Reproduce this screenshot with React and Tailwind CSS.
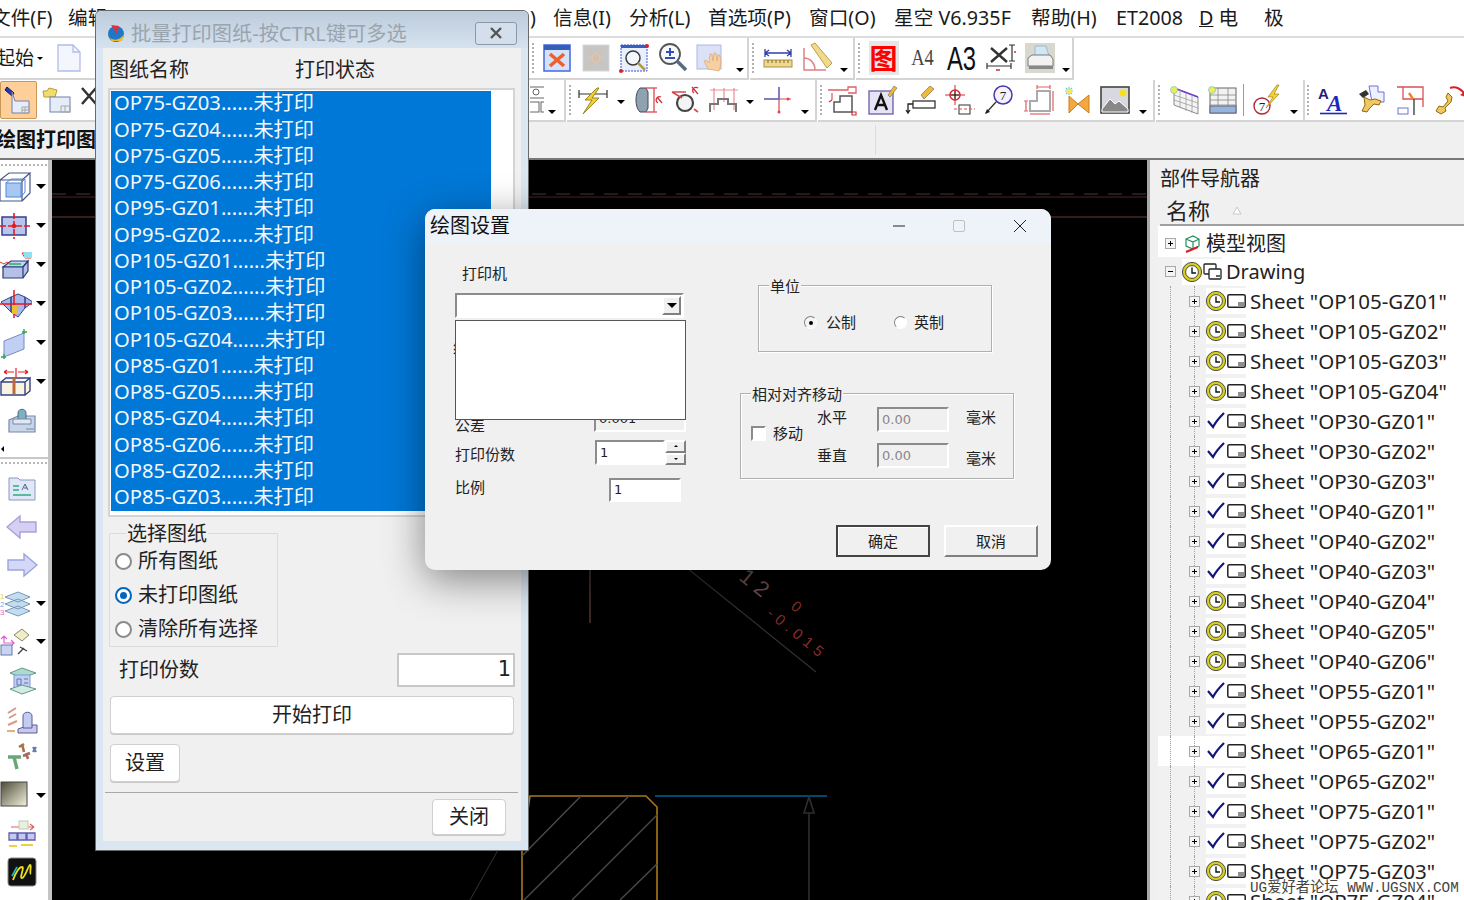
import React from "react";

const Svg = ({ children, className = "w-[32px] h-[32px]" }) => (
  <svg viewBox="0 0 32 32" className={`${className} shrink-0`} fill="none">
    {children}
  </svg>
);

// toolbar icons
const icons = {
  closeFrame: (
    <>
      <rect x="3" y="3" width="26" height="26" fill="#d5e2fb" stroke="#4468e0" strokeWidth="1.5" />
      <rect x="3" y="3" width="26" height="5" fill="#3560b8" />
      <path d="M9 12l14 12M23 12L9 24" stroke="#f0602a" strokeWidth="3.5" />
    </>
  ),
  greyFrame: (
    <>
      <rect x="3" y="3" width="26" height="26" fill="#c6c6c6" stroke="#d8d8d8" />
      <path d="M9 9l14 14M23 9L9 23" stroke="#d8bfa8" strokeWidth="3" />
      <circle cx="16" cy="16" r="4" stroke="#d8c8b8" strokeWidth="1.5" />
    </>
  ),
  zoomFrame: (
    <>
      <rect x="3" y="3" width="26" height="26" fill="#e9f0fb" stroke="#3a50d0" strokeDasharray="2 1" />
      <rect x="3" y="3" width="26" height="3" fill="#3560b8" />
      <circle cx="15" cy="16" r="7" fill="#f4f8fd" stroke="#3a3a3a" strokeWidth="1.5" />
      <path d="M20 21l7 7" stroke="#b09a50" strokeWidth="2.5" />
      <circle cx="29" cy="4" r="2" fill="#d8202a" />
      <circle cx="3" cy="29" r="2" fill="#d8202a" />
    </>
  ),
  zoomPm: (
    <>
      <circle cx="13" cy="12" r="10" fill="#f6f8fc" stroke="#555" strokeWidth="1.8" />
      <path d="M13 6v8M9 10h8M8 16h10" stroke="#3050b8" strokeWidth="2" />
      <path d="M20 19l9 9" stroke="#5a6a80" strokeWidth="3.5" />
    </>
  ),
  hand: (
    <>
      <rect x="2" y="3" width="24" height="24" fill="#dbe2f7" stroke="#aeb8e0" />
      <path d="M13 27l-4-8 2-1 3 3 1-9 2 0 1 7 1-8 2 0 1 8 1-6 2 0 1 9-2 7z" fill="#f7cfa0" stroke="#d8a878" strokeWidth=".7" />
    </>
  ),
  ruler: (
    <>
      <path d="M3 11h26M3 11l4-3M3 11l4 3M29 11l-4-3M29 11l-4 3M3 7v8M29 7v8" stroke="#3040a8" strokeWidth="1.3" />
      <rect x="2" y="18" width="28" height="7" fill="#f0d890" stroke="#a89040" />
      <path d="M6 18v3M10 18v3M14 18v3M18 18v3M22 18v3M26 18v3" stroke="#806820" />
    </>
  ),
  angle: (
    <>
      <path d="M3 6v22h22M3 16c6 0 11 5 11 12" stroke="#e08088" strokeWidth="1.5" />
      <path d="M10 3l4-2 17 20-5 5z" fill="#f2d98c" stroke="#b8a050" />
    </>
  ),
  dimX: (
    <>
      <path d="M6 6l16 14M22 6L6 20" stroke="#333" strokeWidth="2.4" />
      <path d="M2 24h24M2 21v6M26 21v6M24 3h6M27 3v16M24 19h6" stroke="#333" strokeWidth="1.2" />
      <path d="M11 28h4M29 10h2" stroke="#d03030" strokeWidth="1.5" />
    </>
  ),
  printer: (
    <>
      <rect x="1" y="1" width="30" height="30" fill="#d8d8cf" />
      <path d="M11 4h11l3 10H11z" fill="#d0e8f4" stroke="#a0b8c8" />
      <path d="M4 16l4-3h18l3 4v7H4z" fill="#f2f2f2" stroke="#7a7a7a" />
      <path d="M5 24h24v3H5z" fill="#888" />
    </>
  ),
  flash: (
    <>
      <path d="M4 3l7 6-2 3-7-6z" fill="#2638b8" stroke="#101860" />
      <path d="M9 8l3 9 14 0v12H9z" fill="#e6edf8" stroke="#7080a8" />
      <path d="M19 23h7v6h-7zM19 26h7M22 23v6" stroke="#a8a8a8" />
    </>
  ),
  openSheet: (
    <>
      <path d="M2 7h4l2-3 8 2-2 7H3z" fill="#f2dc70" stroke="#b89c30" />
      <rect x="9" y="13" width="20" height="15" fill="#e6edf8" stroke="#7080a8" />
      <path d="M20 22h9v6h-9zM24 22v6" stroke="#a8a8a8" />
    </>
  ),
  deleteSheet: (
    <path d="M2 4l14 16M16 4L2 20" stroke="#333" strokeWidth="2.5" />
  ),
  grid4: (
    <>
      <rect x="3" y="3" width="22" height="11" stroke="#666" />
      <circle cx="10" cy="8" r="3" stroke="#666" />
      <rect x="3" y="18" width="10" height="10" stroke="#666" />
      <rect x="15" y="18" width="10" height="10" stroke="#666" />
    </>
  ),
  bolt: (
    <>
      <path d="M2 6v8M30 6v8M2 10h28" stroke="#333" strokeWidth="1.2" />
      <path d="M20 4L8 16h7L6 30l16-16h-7l7-10z" fill="#f4d030" stroke="#9a8420" />
    </>
  ),
  cyl: (
    <>
      <path d="M8 4h6l2 4v16l-2 4H8c-3-3-4-7-4-12s1-9 4-12z" fill="#8ea2b0" stroke="#445" />
      <path d="M14 4h11M14 28h11M22 4v24" stroke="#e06068" strokeWidth="1.5" />
      <path d="M25 13l5 6M29 13a3 3 0 1 0-3 6" stroke="#d03038" strokeWidth="1.3" />
    </>
  ),
  ring: (
    <>
      <circle cx="15" cy="19" r="8" fill="#f4f4f4" stroke="#444" strokeWidth="2.2" />
      <path d="M2 8l10 6M2 8h14M24 25l4 3" stroke="#d84850" strokeWidth="1.6" />
      <path d="M22 3l6 7M28 4a3 3 0 1 0-4 5" stroke="#d03038" strokeWidth="1.3" />
    </>
  ),
  notch: (
    <>
      <path d="M6 4v22M16 4v14M26 4v22M2 6h28" stroke="#e89098" strokeWidth="1.2" />
      <path d="M2 28v-8h8v-5h10v5h8v8" stroke="#777" strokeWidth="2" />
    </>
  ),
  cross: (
    <>
      <path d="M2 15h15" stroke="#6060b0" strokeWidth="1.6" />
      <path d="M17 3v12" stroke="#6060b0" strokeWidth="1.6" />
      <path d="M17 15h12M17 15v12" stroke="#d84850" strokeWidth="1.2" />
      <circle cx="26" cy="15" r="1.5" fill="#d84850" />
      <circle cx="17" cy="28" r="1.5" fill="#d84850" />
    </>
  ),
  detail: (
    <>
      <path d="M2 6h20v-3h8v6H22M6 9v7" stroke="#e06068" strokeWidth="1.3" />
      <path d="M8 28V18h6v-6h12v16z" fill="#fff" stroke="#555" strokeWidth="1.5" />
      <path d="M3 18l3-2M26 28h4v3h-4z" stroke="#d03038" strokeWidth="1.2" />
    </>
  ),
  noteA: (
    <>
      <rect x="3" y="7" width="24" height="23" fill="#e4e4f4" stroke="#6a5aa8" strokeWidth="1.3" />
      <path d="M9 26l6-15 6 15M11 21h8" stroke="#111" strokeWidth="2.4" />
      <path d="M22 11l6-9 3 2-7 9z" fill="#f2b838" stroke="#775" strokeWidth=".7" />
    </>
  ),
  pencilRect: (
    <>
      <path d="M16 11l9-9 4 3-10 10z" fill="#f2b838" stroke="#775" strokeWidth=".7" />
      <rect x="8" y="17" width="22" height="7" fill="#fff" stroke="#333" strokeWidth="1.3" />
      <path d="M8 20H3v9M1 26l2 3 2-3" stroke="#222" strokeWidth="1.3" />
    </>
  ),
  target: (
    <>
      <circle cx="11" cy="11" r="5" stroke="#d02830" strokeWidth="1.5" />
      <path d="M1 11h20M11 1v20" stroke="#d02830" />
      <path d="M11 7v8M7 11h8" stroke="#222" />
      <rect x="15" y="21" width="11" height="9" fill="#fff" stroke="#333" />
      <path d="M10 25h21" stroke="#d84850" strokeDasharray="3 2" />
    </>
  ),
  balloon: (
    <>
      <circle cx="20" cy="11" r="9" fill="#f4f2fc" stroke="#4838a8" strokeWidth="1.5" />
      <text x="20" y="16" textAnchor="middle" fontSize="13" fontFamily="Liberation Serif" fill="#222">7</text>
      <path d="M13 18L3 29" stroke="#333" strokeWidth="1.3" />
      <path d="M2 30l2-5 3 3z" fill="#222" />
    </>
  ),
  step: (
    <>
      <path d="M7 27V17h7V7h13v20z" stroke="#aaa" strokeWidth="2" />
      <path d="M14 3h13M14 1v4M27 1v4M3 17v10M1 17h4M1 27h4M30 7v20" stroke="#e06068" strokeWidth="1.2" />
      <path d="M7 30h20" stroke="#e06068" strokeWidth="1.2" />
    </>
  ),
  sparkBow: (
    <>
      <path d="M8 3v8M4 7h8M5 4l6 6M11 4l-6 6" stroke="#60c8e8" strokeWidth="1.2" />
      <circle cx="8" cy="7" r="2.6" fill="#f8e850" />
      <path d="M8 12l9 8-9 9zM28 11v18l-11-9z" fill="#f6a840" stroke="#c88020" />
    </>
  ),
  image: (
    <>
      <rect x="2" y="3" width="28" height="26" fill="#d8d8e0" stroke="#444" strokeWidth="1.6" />
      <circle cx="24" cy="9" r="3.5" fill="#f8e020" />
      <path d="M3 25l8-10 5 5 4-3 9 8v3H3z" fill="#888" stroke="#fff" />
    </>
  ),
  sparkGrid: (
    <>
      <path d="M6 4l24 9v17L6 21z" fill="#f4f4f6" stroke="#8a8a8a" />
      <path d="M6 4l24 9" stroke="#7040c8" strokeWidth="1.8" />
      <path d="M6 11l24 8M6 16l24 8M12 6v18M18 9v18M24 11v18" stroke="#a0a0a0" strokeWidth=".8" />
      <circle cx="6" cy="6" r="3.5" fill="#f8e850" stroke="#60c8e8" strokeWidth=".7" />
    </>
  ),
  sparkTable: (
    <>
      <rect x="4" y="4" width="26" height="25" fill="#f2f2f2" stroke="#666" />
      <path d="M4 11h26M4 16h26M4 21h26M12 4v25M22 4v25" stroke="#888" strokeWidth=".8" />
      <rect x="4" y="22" width="26" height="7" fill="#96b4e0" stroke="#667" />
      <circle cx="6" cy="6" r="3.5" fill="#f8e850" stroke="#60c8e8" strokeWidth=".7" />
    </>
  ),
  boltBalloon: (
    <>
      <circle cx="11" cy="22" r="8" fill="#fff" stroke="#b02838" strokeWidth="1.4" />
      <text x="11" y="27" textAnchor="middle" fontSize="13" fontFamily="Liberation Serif" fill="#222">7</text>
      <path d="M26 1l-9 12h5l-7 11 13-14h-5l5-9z" fill="#f4d030" stroke="#9a8420" strokeWidth=".7" />
    </>
  ),
  aa: (
    <>
      <text x="1" y="15" fontSize="15" fontWeight="700" fontFamily="Liberation Sans" fill="#281878">A</text>
      <text x="10" y="27" fontSize="23" fontWeight="700" fontStyle="italic" fontFamily="Liberation Serif" fill="#1828c0">A</text>
      <path d="M3 29.5h27" stroke="#1828c0" strokeWidth="1.6" />
    </>
  ),
  wrenchSheet: (
    <>
      <path d="M13 2h9v6h6v10H16z" fill="#eef0fc" stroke="#6a70e0" />
      <path d="M3 10l7-4 3 4-6 4z" fill="#333" />
      <path d="M8 13l6 3 5-1 6 2-2 4-5-1-5 5-2 3-5-1 3-6z" fill="#f0c860" stroke="#906818" />
    </>
  ),
  frameCross: (
    <>
      <path d="M2 3h26v20M8 3v12h20" stroke="#d85058" strokeWidth="1.3" />
      <path d="M14 9l4 6" stroke="#f08030" strokeWidth="2.4" />
      <path d="M19 15v16" stroke="#333" strokeWidth="1.3" />
      <rect x="3" y="24" width="10" height="6" stroke="#6a70d8" />
    </>
  ),
  wrenchArrow: (
    <>
      <path d="M16 4c6-2 12 1 15 7" stroke="#d82028" strokeWidth="2" />
      <path d="M31 13l-5-2 4-3z" fill="#d82028" />
      <path d="M14 9l4 4-1 5-6 6 1 3-5 3-5-3 3-5 4 1 5-6-2-4z" fill="#f0c860" stroke="#906818" />
    </>
  ),
  // left column
  wireCube: (
    <>
      <path d="M0 9h22v21H0zM22 9l8-7H9L0 9M30 2v20l-8 8" stroke="#485888" strokeWidth="1.2" />
      <rect x="6" y="12" width="15" height="14" fill="#a8c8f4" stroke="#5088d8" />
      <path d="M6 12l5-4h14l-4 4M25 8v13l-4 5" stroke="#5088d8" />
    </>
  ),
  crossRect: (
    <>
      <rect x="2" y="7" width="24" height="18" fill="#b8c4ec" stroke="#34408c" strokeWidth="1.5" />
      <path d="M14 3v26M0 16h30" stroke="#e81820" strokeWidth="1.6" strokeDasharray="6 2" />
      <circle cx="14" cy="16" r="2.2" fill="#e81820" />
    </>
  ),
  boxWave: (
    <>
      <path d="M3 18l8-6h17l-5 6z" fill="#c0d8f0" stroke="#2a3a78" strokeWidth="1.2" />
      <path d="M3 18h20v11H3zM23 18l5-6v10l-5 7" fill="#b4c0e8" stroke="#2a3a78" strokeWidth="1.2" />
      <path d="M0 13l4 2 3-2 4 2M22 4h9v5h-6z" stroke="#e83038" />
      <rect x="24" y="3" width="8" height="6" fill="#90e0f0" />
      <rect x="9" y="14" width="12" height="2" fill="#50b880" />
    </>
  ),
  housing: (
    <>
      <path d="M1 14l10-5v15zM25 9l8 5-8 6zM11 9l7-3 7 3v11l-7 9-7-5z" fill="#a8b8e8" stroke="#34408c" />
      <path d="M14 2v28M0 16h32" stroke="#e81820" strokeWidth="1.5" />
      <rect x="12" y="17" width="5" height="9" fill="#e8c030" />
    </>
  ),
  plane: (
    <>
      <path d="M4 14l20-8v16L4 30z" fill="#c0d0f4" stroke="#7888c8" />
      <path d="M1 30h5M4 27v5M22 5h5M24 2v5" stroke="#30a848" strokeWidth="1.4" />
    </>
  ),
  boxArrows: (
    <>
      <path d="M1 16h24v13H1zM25 16l5-4v13l-5 4M1 16l5-4h24" fill="#f8f4e0" stroke="#34408c" strokeWidth="1.4" />
      <path d="M14 12v16" stroke="#c06838" strokeWidth="3" />
      <path d="M16 2v9M4 6h10M18 6h10M4 6l3-2M4 6l3 2M28 6l-3-2M28 6l-3 2" stroke="#e81820" strokeWidth="1.2" />
    </>
  ),
  plate: (
    <>
      <path d="M3 15l9-4h17v16H3z" fill="#c8d4e8" stroke="#7888a8" strokeWidth="1.2" />
      <path d="M12 8c0-5 8-5 8 0v8h-8z" fill="#80b0c0" stroke="#506888" />
      <path d="M7 14h18v5H7z" fill="#e0e8f4" stroke="#7888a8" />
      <path d="M20 24h8" stroke="#7888a8" />
    </>
  ),
  tagA: (
    <>
      <path d="M3 6h9l2 2h15v20H3z" fill="#e0e8f8" stroke="#8898c0" />
      <path d="M7 14h6M7 18h6M7 23h18" stroke="#30a880" strokeWidth="1.3" />
      <path d="M16 18l3-6 3 6M18 16h3" stroke="#506090" />
    </>
  ),
  arrowL: <path d="M1 16L14 5v6h16v10H14v6z" fill="#d4d0f4" stroke="#a8a0d8" strokeWidth="1.4" />,
  arrowR: <path d="M31 16L18 5v6H2v10h16v6z" fill="#d4d8f8" stroke="#9ca4dc" strokeWidth="1.4" />,
  layers: (
    <>
      <path d="M5 10l13-5 12 5-12 5zM5 17l13-5 12 5-12 5zM5 24l13-5 12 5-12 5z" fill="#c4dcf0" stroke="#7898b8" />
      <text x="0" y="12" fontSize="8" fill="#e8d040" fontFamily="Liberation Sans">1</text>
      <text x="0" y="20" fontSize="8" fill="#70b0f0" fontFamily="Liberation Sans">2</text>
      <text x="0" y="28" fontSize="8" fill="#f060c0" fontFamily="Liberation Sans">3</text>
    </>
  ),
  layerMove: (
    <>
      <path d="M14 9l8-6 7 6-7 6z" fill="#f0ecc8" stroke="#888868" />
      <path d="M1 13l3-3 3 3M4 10v7h10M11 14l3 3-3 3" stroke="#e060d0" strokeWidth="1.2" />
      <rect x="1" y="19" width="11" height="10" fill="#c8d4f0" stroke="#6878a8" />
      <path d="M18 28l6-6M20 21l7 4" stroke="#444" strokeWidth="1.4" />
    </>
  ),
  sheetStack: (
    <>
      <path d="M4 9l12-5 14 5-14 5z" fill="#a8dcd0" stroke="#689888" />
      <rect x="8" y="11" width="16" height="14" fill="#c0d0f4" stroke="#8898c8" />
      <path d="M11 15h4v6h-4zM18 15h4M18 19h4" stroke="#6070b0" />
      <path d="M4 25l12-4 14 4-14 5z" fill="#d0ece4" stroke="#689888" />
    </>
  ),
  cylText: (
    <>
      <path d="M12 26l12-4h7v8H12z" fill="#cbc8f0" stroke="#5a5a98" />
      <path d="M17 13c0-5 9-5 9 0v12h-9z" fill="#c4ccf4" stroke="#5a5a98" />
      <path d="M2 10l8-5M3 15l7-4M2 22l9-4" stroke="#d89888" strokeWidth="2" />
      <path d="M1 28h8" stroke="#e0b080" strokeWidth="2" />
    </>
  ),
  texLogo: (
    <>
      <path d="M2 16h13M8 16l3 12" stroke="#68a878" strokeWidth="3.4" />
      <path d="M13 6l5-3M16 3l2 8" stroke="#a87048" strokeWidth="2.6" />
      <path d="M17 15l7-3M20 12l2 6" stroke="#a86860" strokeWidth="2.6" />
      <path d="M27 6l3 5M30 6l-3 5" stroke="#687ca8" strokeWidth="2.2" />
    </>
  ),
  shade: (
    <>
      <defs>
        <linearGradient id="shadeFill" x1="0" y1="0" x2="1" y2="1">
          <stop offset="0" stopColor="#4a4a3a" />
          <stop offset="1" stopColor="#f4f4dc" />
        </linearGradient>
      </defs>
      <rect x="1" y="3" width="26" height="24" fill="url(#shadeFill)" stroke="#444" />
    </>
  ),
  arrowCubes: (
    <>
      <path d="M5 9h23M28 9l-4-3M28 9l-4 3" stroke="#e06068" strokeWidth="1.2" />
      <rect x="13" y="3" width="9" height="8" fill="#e8f0e0" stroke="#c0c8b8" />
      <path d="M3 15h8v7H3zM12 15h8v7h-8zM21 15h8v7h-8z" fill="#c4c8f4" stroke="#6060a8" strokeWidth="1.3" />
      <path d="M3 28h8M15 27h12" stroke="#f0d040" strokeWidth="2" />
    </>
  ),
  squiggle: (
    <>
      <rect x="2" y="2" width="28" height="28" rx="3" fill="#111" stroke="#8a8a8a" />
      <path d="M7 24c3-8 6-13 9-13 3 0-3 11 0 11s6-12 8-13c2 0-1 8 1 9" stroke="#e8e020" strokeWidth="1.8" />
      <path d="M6 20l5-9" stroke="#20b8c8" strokeWidth="1.6" />
    </>
  ),
};

const Ic = ({ n, className }) => <Svg className={className}>{icons[n]}</Svg>;

const Caret = ({ size = "border-x-[4px] border-t-[4px]", className = "" }) => (
  <span className={`block h-0 w-0 border-x-transparent border-t-black ${size} ${className}`} />
);

const Grip = ({ className = "" }) => (
  <span className={`block h-[30px] w-[6px] shrink-0 border-l-2 border-dotted border-[#b0b0b0] ml-[2px] ${className}`} />
);

const Slot = ({ n, className = "w-[38.5px]" }) => (
  <span className={`flex h-full shrink-0 items-center justify-center ${className}`}>
    <Ic n={n} />
  </span>
);

const CaretSlot = ({ className = "w-[16px]", low = true }) => (
  <span className={`flex h-full shrink-0 justify-center ${low ? "items-end pb-[6px]" : "items-center pt-[4px]"} ${className}`}>
    <Caret />
  </span>
);

const Group = ({ className, children }) => (
  <div className={`flex h-full shrink-0 items-center overflow-hidden border-r-2 border-b-2 border-[#d4d4d4] ${className}`}>
    {children}
  </div>
);

function MenuBar() {
  return (
    <div className="flex h-[38px] items-center border-b-2 border-[#dcdcdc] bg-white text-[19.7px] text-[#1a1a1a]">
      <span className="w-[68px] shrink-0 -indent-[9px] whitespace-nowrap">文件(F)</span>
      <span className="w-[462px] shrink-0 whitespace-nowrap">编辑(E)</span>
      <span className="w-[23px] shrink-0">)</span>
      <span className="w-[76px] shrink-0 whitespace-nowrap">信息(I)</span>
      <span className="w-[79px] shrink-0 whitespace-nowrap">分析(L)</span>
      <span className="w-[101px] shrink-0 whitespace-nowrap">首选项(P)</span>
      <span className="w-[85px] shrink-0 whitespace-nowrap">窗口(O)</span>
      <span className="w-[137px] shrink-0 whitespace-nowrap">星空 V6.935F</span>
      <span className="w-[85px] shrink-0 whitespace-nowrap">帮助(H)</span>
      <span className="w-[83px] shrink-0 whitespace-nowrap">ET2008</span>
      <span className="w-[65px] shrink-0 whitespace-nowrap"><span className="underline">D</span> 电</span>
      <span className="whitespace-nowrap">极</span>
    </div>
  );
}

function ToolbarTop() {
  return (
    <div className="flex h-[42px] bg-white">
      <div className="flex h-full w-[530px] shrink-0 items-center border-b-2 border-[#d4d4d4]">
        <span className="-ml-[4px] whitespace-nowrap text-[19px] text-[#1a1a1a]">起始</span>
        <Caret size="border-x-[3px] border-t-[3px]" className="ml-[3px]" />
        <svg viewBox="0 0 26 30" className="ml-[13px] h-[30px] w-[26px]" fill="none">
          <path d="M2 2h15l7 7v19H2z" fill="#f4f6fe" stroke="#b4bce8" strokeWidth="1.3" />
          <path d="M17 2v7h7" stroke="#b4bce8" strokeWidth="1.3" />
        </svg>
      </div>
      <Group className="w-[219px]">
        <Grip />
        <Slot n="closeFrame" />
        <Slot n="greyFrame" />
        <Slot n="zoomFrame" />
        <Slot n="zoomPm" />
        <Slot n="hand" />
        <CaretSlot className="w-[18px]" />
      </Group>
      <Group className="ml-[1px] w-[105px]">
        <Grip />
        <Slot n="ruler" className="w-[39px]" />
        <Slot n="angle" className="w-[39px]" />
        <CaretSlot className="w-[15px]" />
      </Group>
      <Group className="ml-[1px] w-[218px]">
        <Grip />
        <span className="flex h-full w-[39px] shrink-0 items-center justify-center">
          <span className="flex h-[34px] w-[30px] items-center justify-center bg-[#e6e6e6] text-[28px] font-bold text-[#ff0000]">图</span>
        </span>
        <span className="flex w-[39px] shrink-0 scale-x-[0.8] justify-center font-['Liberation_Serif',serif] text-[23px] text-[#444]">A4</span>
        <span className="flex w-[39px] shrink-0 scale-x-[0.7] justify-center font-['Liberation_Sans',sans-serif] text-[34px] leading-none text-[#111]">A3</span>
        <Slot n="dimX" className="w-[39px]" />
        <Slot n="printer" className="w-[39px]" />
        <CaretSlot className="w-[14px]" />
      </Group>
      <div className="flex-1" />
    </div>
  );
}

function ToolbarBottom() {
  return (
    <div className="flex h-[42px] bg-white">
      <div className="flex h-full w-[530px] shrink-0 items-center border-b-2 border-[#d4d4d4]">
        <span className="flex h-[38px] w-[37px] shrink-0 items-center justify-center rounded-[2px] border border-[#c89858] bg-[#ffcf99]">
          <Ic n="flash" />
        </span>
        <Slot n="openSheet" className="w-[40px]" />
        <span className="ml-[3px] flex w-[32px] justify-start">
          <Ic n="deleteSheet" />
        </span>
      </div>
      <Group className="w-[36px]">
        <span className="-ml-[4px] w-[18px] shrink-0 overflow-hidden">
          <Ic n="grid4" />
        </span>
        <CaretSlot className="w-[16px]" />
      </Group>
      <Group className="ml-[1px] w-[250px]">
        <Grip />
        <Slot n="bolt" className="-ml-[2px] w-[40px]" />
        <CaretSlot className="w-[15px]" low={false} />
        <Slot n="cyl" className="w-[39px]" />
        <Slot n="ring" className="w-[38px]" />
        <Slot n="notch" className="w-[37px]" />
        <CaretSlot className="w-[15px]" low={false} />
        <Slot n="cross" className="ml-[3px] w-[35px]" />
        <CaretSlot className="w-[20px]" />
      </Group>
      <Group className="ml-[1px] w-[337px]">
        <Grip />
        <Slot n="detail" className="-ml-[4px] w-[40px]" />
        <Slot n="noteA" className="w-[39px]" />
        <Slot n="pencilRect" className="w-[39px]" />
        <Slot n="target" className="w-[39px]" />
        <Slot n="balloon" className="w-[40px]" />
        <Slot n="step" className="w-[39px]" />
        <Slot n="sparkBow" className="w-[38px]" />
        <Slot n="image" className="w-[38px]" />
        <CaretSlot className="w-[17px]" />
      </Group>
      <Group className="ml-[1px] w-[149px]">
        <Grip />
        <Slot n="sparkGrid" className="w-[39px]" />
        <Slot n="sparkTable" className="w-[38px]" />
        <span className="mx-[2px] h-[32px] w-px shrink-0 bg-[#9a9a9a]" />
        <Slot n="boltBalloon" className="w-[42px]" />
        <CaretSlot className="w-[12px]" />
      </Group>
      <div className="flex min-w-0 flex-1 items-center overflow-hidden border-b-2 border-[#d4d4d4]">
        <Grip />
        <Slot n="aa" className="w-[40px]" />
        <Slot n="wrenchSheet" className="w-[38px]" />
        <Slot n="frameCross" className="w-[40px]" />
        <Slot n="wrenchArrow" className="w-[38px]" />
      </div>
    </div>
  );
}

function TabStrip() {
  return (
    <div className="flex h-[38px] items-center border-b-2 border-[#787878] bg-[#f0f0f0]">
      <span className="w-[875px] shrink-0 -indent-[4px] whitespace-nowrap text-[20px] font-bold text-[#111]">绘图打印图</span>
      <span className="h-[30px] w-px bg-[#dcdcdc]" />
    </div>
  );
}

function LeftTool({ n, caret, className = "h-[39px]" }) {
  return (
    <div className={`flex items-center ${caret ? "" : "pl-[6px]"} ${className}`}>
      <Ic n={n} />
      {caret && <Caret size="border-x-[5px] border-t-[5px]" className="ml-[4px]" />}
    </div>
  );
}

function LeftBar() {
  const lower = "h-[38.4px]";
  return (
    <div className="w-[52px] shrink-0 border-r-4 border-[#c4c4c4] bg-white">
      <div className="mx-[1px] mt-[4px] h-[3px] border-t-2 border-dotted border-[#b8b8b8]" />
      <LeftTool n="wireCube" caret />
      <LeftTool n="crossRect" caret />
      <LeftTool n="boxWave" caret />
      <LeftTool n="housing" caret />
      <LeftTool n="plane" caret />
      <LeftTool n="boxArrows" caret />
      <LeftTool n="plate" />
      <div className="flex h-[17px] items-center pl-[1px]">
        <span className="block h-0 w-0 border-y-[3px] border-r-[3px] border-y-transparent border-r-black" />
      </div>
      <div className="h-[3px] border-t-2 border-[#c8c8c8]" />
      <div className="mx-[1px] mt-[2px] h-[7px] border-t-2 border-dotted border-[#b8b8b8]" />
      <LeftTool n="tagA" className={lower} />
      <LeftTool n="arrowL" className={lower} />
      <LeftTool n="arrowR" className={lower} />
      <LeftTool n="layers" caret className={lower} />
      <LeftTool n="layerMove" caret className={lower} />
      <LeftTool n="sheetStack" className={lower} />
      <LeftTool n="cylText" className={lower} />
      <LeftTool n="texLogo" className={lower} />
      <LeftTool n="shade" caret className={lower} />
      <LeftTool n="arrowCubes" className={lower} />
      <LeftTool n="squiggle" className={lower} />
    </div>
  );
}

function Drawing() {
  return (
    <svg viewBox="52 160 1095 740" className="absolute inset-0 h-full w-full" fill="none">
      <path d="M52 194h1095" stroke="#4a3a3a" strokeDasharray="14 10" />
      <path d="M52 197h1095" stroke="#4a2626" />
      <path d="M52 217h1095" stroke="#6e3c3c" />
      <path d="M590 560v63" stroke="#5e3c3c" strokeWidth="1.3" />
      <path d="M682 564l134 108" stroke="#353030" strokeWidth="1.2" />
      <g fontFamily="Liberation Sans" fontSize="22" fill="#6e4c4c" letterSpacing="6">
        <text transform="translate(738 579) rotate(39)">12</text>
      </g>
      <g fontFamily="Liberation Sans" fontSize="15" fill="#8a2c2c" letterSpacing="5">
        <text transform="translate(790 608) rotate(39)">0</text>
        <text transform="translate(766 615) rotate(39)">-0.015</text>
      </g>
      <path d="M522 900v-49l8-55h116l11 11v93" stroke="#a87818" strokeWidth="1.6" />
      <path d="M581 796l-59 60M629 796l-105 104M657 815l-85 85M657 864l-37 36" stroke="#4a4a4a" strokeWidth="1.4" />
      <path d="M655 796h172" stroke="#004a70" strokeWidth="2" />
      <path d="M809 797l-5 16h10zM809 813v87" stroke="#2e2e2e" strokeWidth="1.6" />
      <path d="M498 850l-28 50" stroke="#333" />
    </svg>
  );
}

const sheets = [
  ["OP105-GZ01", "c"], ["OP105-GZ02", "c"], ["OP105-GZ03", "c"], ["OP105-GZ04", "c"],
  ["OP30-GZ01", "v"], ["OP30-GZ02", "v"], ["OP30-GZ03", "v"],
  ["OP40-GZ01", "v"], ["OP40-GZ02", "v"], ["OP40-GZ03", "v"],
  ["OP40-GZ04", "c"], ["OP40-GZ05", "c"], ["OP40-GZ06", "c"],
  ["OP55-GZ01", "v"], ["OP55-GZ02", "v"],
  ["OP65-GZ01", "v", true], ["OP65-GZ02", "v"],
  ["OP75-GZ01", "v"], ["OP75-GZ02", "v"],
  ["OP75-GZ03", "c"], ["OP75-GZ04", "c"],
];

const Clock = () => (
  <svg viewBox="0 0 20 20" className="h-[20px] w-[20px] shrink-0" fill="none">
    <circle cx="10" cy="10" r="8" fill="#fff" stroke="#d8d020" strokeWidth="3" />
    <circle cx="10" cy="10" r="9.6" stroke="#222" strokeWidth=".8" />
    <circle cx="10" cy="10" r="6.4" stroke="#222" strokeWidth=".8" />
    <path d="M10 5.5V11h4" stroke="#111" strokeWidth="1.4" />
  </svg>
);

const Check = () => (
  <svg viewBox="0 0 20 20" className="h-[20px] w-[20px] shrink-0" fill="none">
    <path d="M2 10l5 6c3-6 6-9 11-14" stroke="#14147c" strokeWidth="2.2" />
  </svg>
);

const SheetIco = () => (
  <svg viewBox="0 0 19 14" className="h-[14px] w-[19px] shrink-0" fill="none">
    <rect x=".8" y=".8" width="17.4" height="12.4" rx="1.5" fill="#fff" stroke="#222" strokeWidth="1.5" />
    <path d="M11 11h6M11 9h6" stroke="#222" strokeWidth="1.2" />
  </svg>
);

const Plus = ({ minus }) => (
  <span className="relative block h-[11px] w-[11px] shrink-0 border border-[#a8a8a8] bg-[#f4f4f4]">
    <span className="absolute left-[2px] top-[4px] h-px w-[5px] bg-black" />
    {!minus && <span className="absolute left-[4px] top-[2px] h-[5px] w-px bg-black" />}
  </span>
);

function SheetRow({ name, kind, active }) {
  return (
    <div className="flex h-[30px] items-center whitespace-nowrap text-[20.5px] text-[#222]">
      <div className={`flex h-full w-[88px] shrink-0 items-center ${active ? "bg-white" : "bg-[#f1f1f1]"}`}>
        <span className="ml-[12px] h-full w-[19px] shrink-0 border-l border-dotted border-[#a0a0a0]" />
        <span className="flex h-full w-[11px] shrink-0 flex-col items-center">
          <span className="w-px flex-1 border-l border-dotted border-[#a0a0a0]" />
          <Plus />
          <span className="w-px flex-1 border-l border-dotted border-[#a0a0a0]" />
        </span>
        <span className="ml-[6px] flex h-[26px] w-[40px] items-center gap-[1px] bg-white">
          {kind === "c" ? <Clock /> : <Check />}
          <SheetIco />
        </span>
      </div>
      <span className="ml-[4px]">Sheet "{name}"</span>
    </div>
  );
}

function Navigator() {
  return (
    <div className="flex w-[317px] shrink-0 flex-col overflow-hidden border-l-[3px] border-[#a8a8a8] bg-[#f0f0f0]">
      <div className="flex h-[37px] shrink-0 items-center pl-[10px] text-[20px] text-[#222]">部件导航器</div>
      <div className="ml-[10px] flex h-[29px] shrink-0 items-center border-b-2 border-[#a0a0a0] bg-[#f0f0f0] pl-[6px] text-[22px] text-[#222]">
        <span className="w-[66px]">名称</span>
        <svg viewBox="0 0 10 10" className="h-[10px] w-[10px]" fill="none">
          <path d="M5 1l4 7H1z" fill="#fff" stroke="#c8c8c8" />
        </svg>
      </div>
      <div className="ml-[8px] min-h-0 flex-1 overflow-hidden bg-white pt-[1px]">
        <div className="flex h-[30px] items-center whitespace-nowrap pt-[3px] text-[20px] text-[#222]">
          <span className="ml-[7px] flex w-[17px] justify-start"><Plus /></span>
          <svg viewBox="0 0 20 20" className="h-[20px] w-[20px] shrink-0" fill="none">
            <path d="M4 5l7-3 6 3v7l-6 3-7-3zM4 5l7 3 6-3M11 8v7" stroke="#20905c" strokeWidth="1.2" />
            <path d="M4 18l12-5" stroke="#d81c24" strokeWidth="2" />
          </svg>
          <span className="ml-[4px]">模型视图</span>
        </div>
        <div className="flex h-[29px] items-center whitespace-nowrap text-[20px] text-[#222]">
          <div className="flex h-full w-[64px] shrink-0 items-center bg-[#f1f1f1]">
            <span className="ml-[7px] w-[17px]"><Plus minus /></span>
            <span className="flex h-[26px] w-[40px] items-center gap-[1px] bg-white">
              <Clock />
              <svg viewBox="0 0 19 18" className="h-[18px] w-[19px]" fill="none">
                <rect x="1" y="1" width="12" height="10" rx="1" fill="#fff" stroke="#222" strokeWidth="1.3" />
                <rect x="6" y="6" width="12" height="10" rx="1" fill="#fff" stroke="#222" strokeWidth="1.3" />
                <path d="M13 13h4" stroke="#222" strokeWidth="1.4" />
              </svg>
            </span>
          </div>
          <span className="ml-[4px]">Drawing</span>
        </div>
        {sheets.map(([name, kind, active]) => (
          <SheetRow key={name} name={name} kind={kind} active={active} />
        ))}
      </div>
    </div>
  );
}

const listRows = [
  "OP75-GZ03......未打印", "OP75-GZ04......未打印", "OP75-GZ05......未打印", "OP75-GZ06......未打印",
  "OP95-GZ01......未打印", "OP95-GZ02......未打印", "OP105-GZ01......未打印", "OP105-GZ02......未打印",
  "OP105-GZ03......未打印", "OP105-GZ04......未打印", "OP85-GZ01......未打印", "OP85-GZ05......未打印",
  "OP85-GZ04......未打印", "OP85-GZ06......未打印", "OP85-GZ02......未打印", "OP85-GZ03......未打印",
];

function Radio({ checked, label }) {
  return (
    <div className="flex h-[34px] items-center">
      <span className={`ml-[5px] flex h-[17px] w-[17px] items-center justify-center rounded-full border-2 bg-white ${checked ? "border-[#0067c0]" : "border-[#8a8a8a]"}`}>
        {checked && <span className="h-[7px] w-[7px] rounded-full bg-[#0067c0] ring-2 ring-white" />}
      </span>
      <span className="ml-[6px]">{label}</span>
    </div>
  );
}

const WhiteBtn = ({ className, children }) => (
  <div className={`flex items-center justify-center rounded-[4px] border border-[#d0d0d0] bg-white shadow-[0_1px_0_#c8c8c8] ${className}`}>
    {children}
  </div>
);

function BatchPrintDialog() {
  return (
    <div className="absolute left-[95px] top-[10px] flex h-[841px] w-[434px] flex-col rounded-t-[6px] border border-[#6a6a6a] bg-[#dbe6f3] text-[20px] text-[#222]">
      <div className="flex h-[37px] shrink-0 items-center rounded-t-[6px] bg-gradient-to-b from-[#bccbdb] to-[#d6e2ef] pl-[10px] pt-[7px]">
        <svg viewBox="0 0 20 20" className="h-[20px] w-[20px]" fill="none">
          <circle cx="10" cy="11" r="8" fill="#1c78c8" />
          <path d="M3 14c4 4 11 4 15-3l-2 7H6z" fill="#f0b830" />
          <path d="M5 2l8 1-2 8z" fill="#e03040" />
        </svg>
        <span className="ml-[5px] whitespace-nowrap text-[20.2px] text-[#9aa4ae]">批量打印图纸-按CTRL键可多选</span>
        <span className="ml-auto mr-[11px] flex h-[23px] w-[42px] items-center justify-center rounded-[3px] border border-[#8a98a8] bg-[#d4dfeb]">
          <svg viewBox="0 0 14 14" className="h-[14px] w-[14px]" fill="none">
            <path d="M2 2l10 10M12 2L2 12" stroke="#555" strokeWidth="2.4" />
          </svg>
        </span>
      </div>
      <div className="mx-[7px] mb-[9px] flex flex-1 flex-col bg-[#f0f0f0]">
        <div className="flex h-[40px] shrink-0 items-center pl-[6px] pt-[3px]">
          <span className="w-[186px]">图纸名称</span>
          <span>打印状态</span>
        </div>
        <div className="ml-[5px] h-[429px] w-[407px] shrink-0 border-2 border-[#d4d4d4] bg-white pl-px pt-px">
          <div className="h-[420px] w-[380px] bg-[#0078d7] pl-[3px] text-[20.2px] text-[#f4f8fc]">
            {listRows.map((r, i) => (
              <div key={i} className="flex h-[26.25px] items-center whitespace-nowrap pb-[3px]">{r}</div>
            ))}
          </div>
        </div>
        <div className="relative ml-[6px] mt-[16px] h-[114px] w-[169px] shrink-0 border border-[#dcdcdc] pt-[10px]">
          <span className="absolute -top-[10px] left-[16px] bg-[#f0f0f0] px-px leading-[20px]">选择图纸</span>
          <Radio label="所有图纸" />
          <Radio checked label="未打印图纸" />
          <Radio label="清除所有选择" />
        </div>
        <div className="mt-[6px] flex h-[34px] shrink-0 items-center justify-between pl-[16px]">
          <span>打印份数</span>
          <span className="mr-[6px] flex h-[34px] w-[118px] items-center justify-end border-2 border-[#c8c8c8] bg-white pr-[2px] font-['DejaVu_Sans',sans-serif] text-[21px]">1</span>
        </div>
        <WhiteBtn className="ml-[7px] mt-[9px] h-[38px] w-[404px] shrink-0">开始打印</WhiteBtn>
        <WhiteBtn className="ml-[7px] mt-[10px] h-[38px] w-[70px] shrink-0">设置</WhiteBtn>
        <div className="ml-[2px] mt-[10px] h-px w-[413px] shrink-0 bg-[#a8a8a8]" />
        <WhiteBtn className="ml-[329px] mt-[6px] h-[36px] w-[74px] shrink-0">关闭</WhiteBtn>
      </div>
    </div>
  );
}

const sunken = "border-2 border-t-[#8c8c8c] border-l-[#8c8c8c] border-r-white border-b-white";
const etched = "border border-[#b0b0b0] shadow-[1px_1px_0_#fff,inset_1px_1px_0_#fff]";
const raised = "border-2 border-t-white border-l-white border-r-[#808080] border-b-[#808080]";

const Legend = ({ className, children }) => (
  <span className={`absolute -top-[10px] bg-[#f0f0f0] px-[1px] leading-[20px] ${className}`}>{children}</span>
);

const NumField = ({ className, children }) => (
  <div className={`flex items-center pl-[3px] font-['DejaVu_Sans',sans-serif] text-[13px] ${sunken} ${className}`}>{children}</div>
);

function SettingsDialog() {
  return (
    <div className="absolute left-[425px] top-[209px] flex h-[361px] w-[626px] flex-col overflow-hidden rounded-[10px] bg-[#f0f0f0] text-[15px] text-[#222] shadow-[0_10px_40px_rgba(0,0,0,0.45)]">
      <div className="flex h-[34px] shrink-0 items-center bg-[#eef3f9] pl-[5px]">
        <span className="text-[20px] text-[#111]">绘图设置</span>
        <svg viewBox="0 0 12 12" className="ml-[383px] h-[12px] w-[12px]" fill="none"><path d="M0 6h12" stroke="#222" /></svg>
        <svg viewBox="0 0 12 12" className="ml-[48px] h-[12px] w-[12px]" fill="none"><rect x=".5" y=".5" width="11" height="11" rx="1.5" stroke="#c0c0c0" /></svg>
        <svg viewBox="0 0 14 14" className="ml-[48px] h-[14px] w-[14px]" fill="none"><path d="M1 1l12 12M13 1L1 13" stroke="#222" /></svg>
      </div>
      <div className="flex flex-1">
        <div className="ml-[30px] w-[231px] shrink-0">
          <div className="ml-[7px] mt-[20px] h-[20px] leading-[20px]">打印机</div>
          <div className="relative mt-[10px] h-[25px] w-[229px]">
            <div className={`flex h-full items-center justify-end bg-white pr-[1px] ${sunken}`}>
              <span className={`flex h-[19px] w-[19px] items-center justify-center bg-[#f0f0f0] ${raised}`}>
                <Caret size="border-x-[5px] border-t-[5px]" />
              </span>
            </div>
            <div className="absolute left-0 top-[27px] z-10 h-[100px] w-[231px] border border-[#555] bg-white" />
          </div>
          <div className="-ml-[2px] mt-[19px] h-[20px] leading-[20px]">纸张</div>
          <div className="mt-[50px] flex h-[25px] items-center justify-between">
            <span className="mt-[12px]">公差</span>
            <NumField className="h-[25px] w-[92px] items-start">0.001</NumField>
          </div>
          <div className="mt-[8px] flex h-[25px] items-center">
            <span className="mt-[3px] w-[140px]">打印份数</span>
            <NumField className="h-[25px] w-[70px] bg-white">1</NumField>
            <span className="flex h-[25px] w-[21px] flex-col">
              <span className={`flex flex-1 items-center justify-center bg-[#f0f0f0] ${raised} border`}>
                <span className="block h-0 w-0 border-x-[2px] border-b-[2px] border-x-transparent border-b-black" />
              </span>
              <span className={`flex flex-1 items-center justify-center bg-[#f0f0f0] ${raised} border`}>
                <Caret size="border-x-[2px] border-t-[2px]" />
              </span>
            </span>
          </div>
          <div className="mt-[13px] flex h-[24px] items-center">
            <span className="-mt-[6px] w-[154px]">比例</span>
            <NumField className="h-[24px] w-[72px] bg-white">1</NumField>
          </div>
        </div>
        <div className="ml-[54px] w-[300px] shrink-0">
          <div className={`relative ml-[18px] mt-[42px] flex h-[67px] w-[234px] items-center pl-[45px] pt-[8px] ${etched}`}>
            <Legend className="left-[10px]">单位</Legend>
            <span className="flex h-[13px] w-[13px] items-center justify-center rounded-full border border-t-[#808080] border-l-[#808080] border-r-white border-b-white bg-[#f6f6f6]">
              <span className="h-[4px] w-[4px] rounded-full bg-black" />
            </span>
            <span className="ml-[9px]">公制</span>
            <span className="ml-[38px] h-[13px] w-[13px] rounded-full border border-t-[#808080] border-l-[#808080] border-r-white border-b-white bg-white" />
            <span className="ml-[7px]">英制</span>
          </div>
          <div className={`relative mt-[41px] flex h-[86px] w-[274px] ${etched}`}>
            <Legend className="left-[10px]">相对对齐移动</Legend>
            <div className="ml-[10px] flex items-center self-start pt-[28px]">
              <span className={`h-[15px] w-[15px] bg-white ${sunken}`} />
              <span className="ml-[7px]">移动</span>
            </div>
            <div className="ml-[14px] flex flex-col pt-[13px]">
              <div className="flex h-[25px] items-center">
                <span className="-mt-[4px] w-[60px]">水平</span>
                <NumField className="h-[25px] w-[72px] text-[#888]">0.00</NumField>
                <span className="-mt-[4px] ml-[17px]">毫米</span>
              </div>
              <div className="mt-[11px] flex h-[25px] items-center">
                <span className="w-[60px]">垂直</span>
                <NumField className="h-[25px] w-[72px] text-[#888]">0.00</NumField>
                <span className="ml-[17px] mt-[6px]">毫米</span>
              </div>
            </div>
          </div>
          <div className="ml-[96px] mt-[46px] flex gap-[14px]">
            <div className="flex h-[32px] w-[94px] shrink-0 items-center justify-center border-2 border-[#444] bg-[#f0f0f0] shadow-[inset_1px_1px_0_#fff]">确定</div>
            <div className={`flex h-[32px] w-[94px] shrink-0 items-center justify-center bg-[#f0f0f0] ${raised}`}>取消</div>
          </div>
        </div>
      </div>
    </div>
  );
}

export default function App() {
  return (
    <div className="relative h-[900px] w-[1464px] overflow-hidden bg-[#f0f0f0] font-['Noto_Sans','Noto_Sans_CJK_SC',sans-serif]">
      <MenuBar />
      <ToolbarTop />
      <ToolbarBottom />
      <TabStrip />
      <div className="flex h-[740px]">
        <LeftBar />
        <div className="relative flex-1 bg-black">
          <Drawing />
        </div>
        <Navigator />
      </div>
      <BatchPrintDialog />
      <SettingsDialog />
      <span className="absolute left-[1250px] top-[878px] whitespace-nowrap font-['Liberation_Mono','Noto_Sans_CJK_SC',monospace] text-[14.3px] text-[#444]">UG爱好者论坛 WWW.UGSNX.COM</span>
    </div>
  );
}
